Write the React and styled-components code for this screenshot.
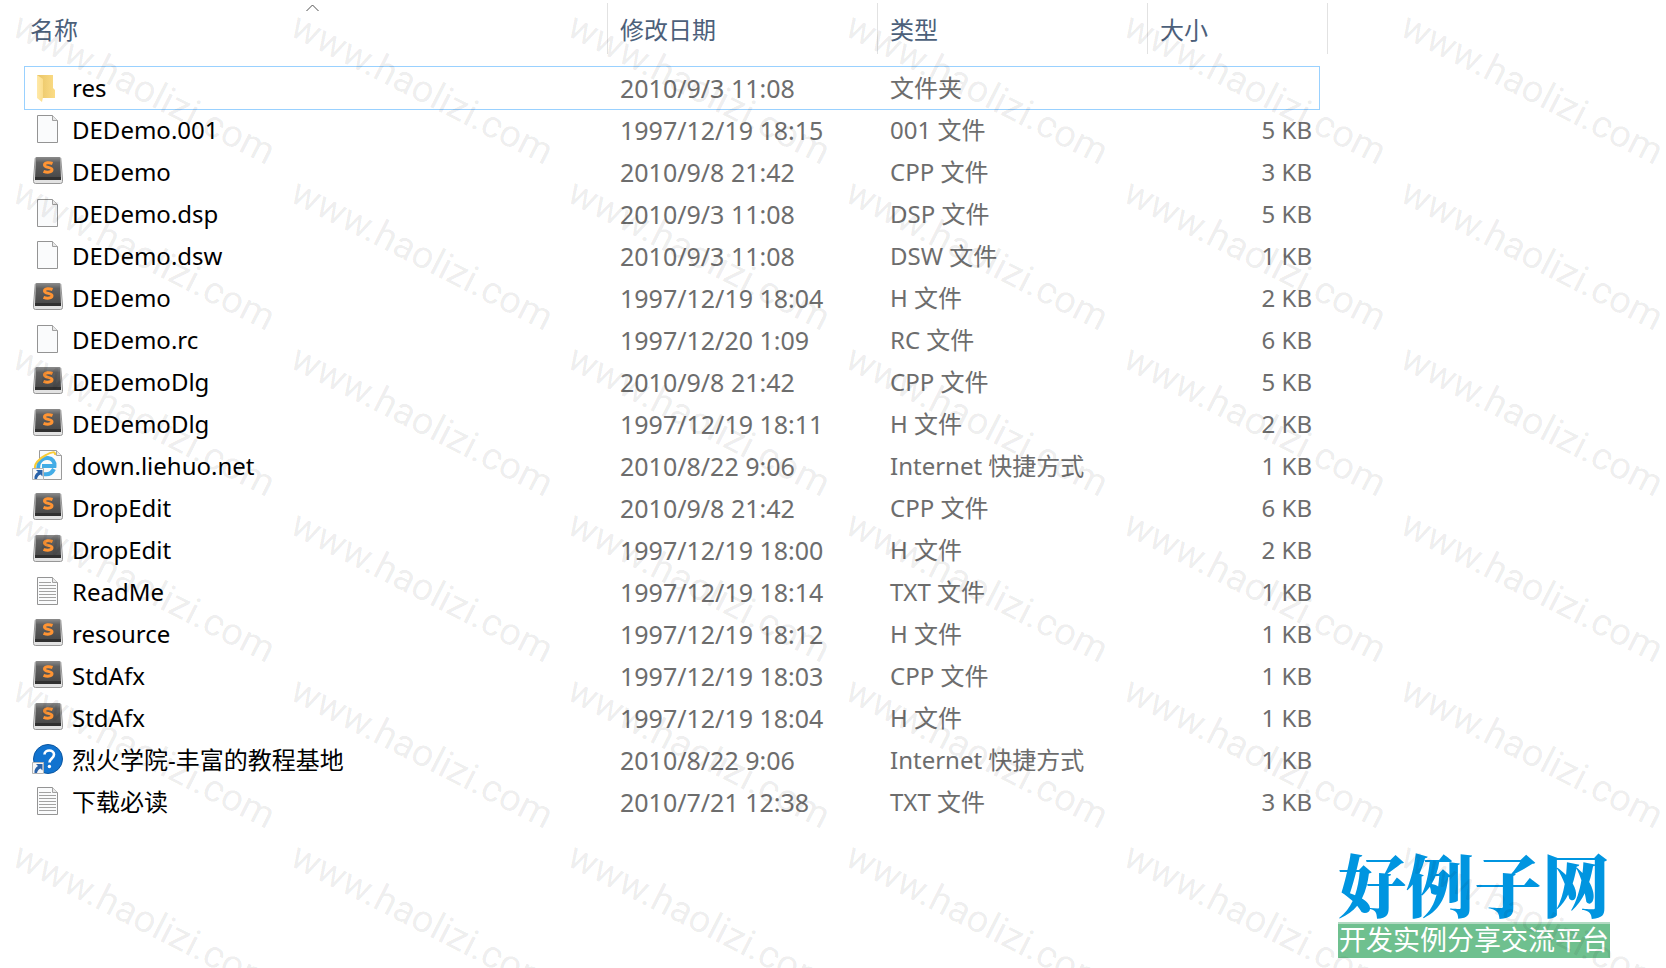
import React from 'react';
import styled, { createGlobalStyle, css } from 'styled-components';

const GlobalStyle = createGlobalStyle`
  * {
    box-sizing: border-box;
  }

  body {
    margin: 0;
    background: #fff;
    font-family: 'Noto Sans', 'Noto Sans CJK SC', sans-serif;
    font-size: 24px;
  }
`;

const Page = styled.main`
  position: relative;
  display: flex;
  flex-direction: column;
  min-height: 100vh;
  overflow: hidden;
`;

const SortMark = styled.div`
  position: absolute;
  top: 4px;
  left: 306px;
  display: flex;
`;

const FileTable = styled.table`
  width: 80%;
  max-width: 1304px;
  margin-left: 24px;
  border-collapse: separate;
  border-spacing: 0;
  table-layout: fixed;
`;

const Column = styled.col`
  width: ${({ $width }) => ($width ? `${$width}px` : 'auto')};
`;

const HeadCell = styled.th`
  position: relative;
  height: 67px;
  padding: 0 0 8px ${({ $first }) => ($first ? 6 : 12)}px;
  color: #4c607a;
  font-weight: 400;
  line-height: 32px;
  text-align: left;
  white-space: nowrap;

  &::after {
    content: '';
    position: absolute;
    top: 3px;
    right: 0;
    width: 1px;
    height: 51px;
    background: #e2e2e2;
  }
`;

const Cell = styled.td`
  height: 42px;
  padding: 0 0 0 12px;
  color: #6d6d6d;
  line-height: 32px;
  white-space: nowrap;
`;

const NameCell = styled(Cell)`
  padding-left: 8px;
  color: #000;
`;

const DateCell = styled(Cell)`
  font-size: 25px;
`;

const SizeCell = styled(Cell)`
  padding-right: 8px;
  text-align: right;
`;

const Row = styled.tr`
  ${({ $selected }) =>
    $selected &&
    css`
      ${Cell} {
        box-shadow: 0 -1px #99d1ff, 0 1px #99d1ff;
      }

      ${NameCell} {
        box-shadow: 0 -1px #99d1ff, 0 1px #99d1ff, inset 1px 0 #99d1ff;
      }

      ${SizeCell} {
        box-shadow: 0 -1px #99d1ff, 0 1px #99d1ff, inset -1px 0 #99d1ff;
      }
    `}
`;

const FileName = styled.div`
  display: flex;
  align-items: center;
  gap: 8px;
`;

const Icon = styled.svg`
  flex: none;
  width: 32px;
  height: 32px;
  margin-bottom: 2px;
`;

const Watermark = styled.div`
  position: absolute;
  inset: 0;
  display: grid;
  grid-template-columns: repeat(6, minmax(0, 1fr));
  grid-auto-rows: 166px;
  color: rgba(0, 0, 0, 0.08);
  font-family: Roboto, sans-serif;
  font-size: 38px;
  line-height: 40px;
  pointer-events: none;
`;

const WatermarkText = styled.span`
  padding: 3px 0 0 16px;
  white-space: nowrap;
  transform: rotate(27deg);
  transform-origin: 16px 23px;
`;

const Brand = styled.footer`
  position: absolute;
  right: 56px;
  bottom: 10px;
  display: flex;
  flex-direction: column;
  width: 272px;
`;

const BrandName = styled.div`
  color: #0095e0;
  font-family: 'Noto Serif CJK SC', 'Noto Sans CJK SC', sans-serif;
  font-size: 68px;
  font-weight: 900;
  line-height: 78px;
`;

const BrandSlogan = styled.div`
  height: 36px;
  border-top: 2px solid #b3dac3;
  background: #6fc08f;
  color: #fff;
  font-family: 'Noto Sans CJK SC', sans-serif;
  font-size: 27px;
  line-height: 30px;
  text-align: center;
  white-space: nowrap;
`;

const FolderIcon = () => (
  <Icon viewBox='0 0 32 32' aria-hidden='true'>
    <defs>
      <linearGradient id='folderBack' x1='0' x2='1'>
        <stop offset='0' stopColor='#e9c465' />
        <stop offset='1' stopColor='#fbdc86' />
      </linearGradient>
      <linearGradient id='folderFront' x1='0' x2='1'>
        <stop offset='0' stopColor='#ffe9a8' />
        <stop offset='1' stopColor='#fbdd8c' />
      </linearGradient>
    </defs>
    <path d='M5 4h16v13l2 2v8H9z' fill='url(#folderBack)' />
    <path d='M5 4l6 4v18l-1 5-5-4z' fill='url(#folderFront)' />
  </Icon>
);

const PaperIcon = ({ lines }) => (
  <Icon viewBox='0 0 32 32' aria-hidden='true'>
    <path d='M5.500 2.500h15l5 5v22h-20z' fill='#fafbfc' stroke='#949494' />
    <path d='M20.500 2.500v5h5' fill='#e8e8e8' stroke='#a0a0a0' />
    {lines && (
      <path
        d='M7 7.500h12M7 10.500h17M7 13.500h17M7 16.500h17M7 19.500h17M7 22.500h17M7 25.500h17'
        stroke='#a2a2a2'
      />
    )}
  </Icon>
);

const SublimeIcon = () => (
  <Icon viewBox='0 0 32 32' aria-hidden='true'>
    <defs>
      <linearGradient id='sublimeKey' x1='0' x2='0' y1='0' y2='1'>
        <stop offset='0' stopColor='#8c8c8c' />
        <stop offset='0.25' stopColor='#606060' />
        <stop offset='1' stopColor='#474747' />
      </linearGradient>
    </defs>
    <path
      d='M4.500 2.500h23q1 0 1.300 1L30.500 24v2.500q0 2-2 2h-25q-2 0-2-2V24L3.200 3.500q.3-1 1.300-1z'
      fill='#e2e2e2'
      stroke='#979797'
    />
    <path d='M5 2h22q1 0 1.200 1L29 24H3L3.800 3Q4 2 5 2z' fill='url(#sublimeKey)' />
    <path d='M3 22h26v3H3z' fill='#303030' />
    <path
      d='M20.500 8.500c-3-1.200-8-1.200-8 1.500 0 3 7.500 1.800 7.500 4.800 0 2.700-5 2.900-8.500 1.500'
      fill='none'
      stroke='#ff9433'
      strokeWidth='3'
    />
  </Icon>
);

const ShortcutArrow = () => (
  <>
    <path d='M.5 19.500h11v11H.5z' fill='#f7f7f7' stroke='#b4b4b4' />
    <path d='M4 21h6.500v6.500l-2-2c-2 1-3 2-3.500 4.500H2.500c-.5-3 1-5.500 3.500-7z' fill='#2a62a8' />
  </>
);

const InternetIcon = () => (
  <Icon viewBox='0 0 32 32' aria-hidden='true'>
    <path d='M7.500 1.500h17l5 5v24h-22z' fill='#fafafa' stroke='#9a9a9a' />
    <path d='M24.500 1.500v5h5' fill='#ececec' stroke='#a0a0a0' />
    <path
      d='M22 20c-2 4-6 6-10.500 5-4-1-6-5-5-9.500 1-4 5-7 9.500-6.500 4.500.5 7 4 6.500 8H10'
      fill='none'
      stroke='#42ace6'
      strokeWidth='4'
    />
    <path
      d='M4 21C0 16 8 9 14 6c5-3 10-4 9 0'
      fill='none'
      stroke='#f9cb35'
      strokeWidth='2'
    />
    <ShortcutArrow />
  </Icon>
);

const HelpIcon = () => (
  <Icon viewBox='0 0 32 32' aria-hidden='true'>
    <circle cx='16' cy='16' r='14.500' fill='#1173cf' stroke='#0b56a0' />
    <path
      d='M12.500 11.500c0-5 9.500-5.500 9.500 0 0 4-4.500 4-4.500 8'
      fill='none'
      stroke='#fff'
      strokeWidth='2.600'
    />
    <circle cx='17.400' cy='23.500' r='1.700' fill='#fff' />
    <ShortcutArrow />
  </Icon>
);

const icons = {
  folder: <FolderIcon />,
  paper: <PaperIcon />,
  text: <PaperIcon lines />,
  sublime: <SublimeIcon />,
  internet: <InternetIcon />,
  help: <HelpIcon />,
};

const files = [
  ['folder', 'res', '2010/9/3 11:08', '文件夹', ''],
  ['paper', 'DEDemo.001', '1997/12/19 18:15', '001 文件', '5 KB'],
  ['sublime', 'DEDemo', '2010/9/8 21:42', 'CPP 文件', '3 KB'],
  ['paper', 'DEDemo.dsp', '2010/9/3 11:08', 'DSP 文件', '5 KB'],
  ['paper', 'DEDemo.dsw', '2010/9/3 11:08', 'DSW 文件', '1 KB'],
  ['sublime', 'DEDemo', '1997/12/19 18:04', 'H 文件', '2 KB'],
  ['paper', 'DEDemo.rc', '1997/12/20 1:09', 'RC 文件', '6 KB'],
  ['sublime', 'DEDemoDlg', '2010/9/8 21:42', 'CPP 文件', '5 KB'],
  ['sublime', 'DEDemoDlg', '1997/12/19 18:11', 'H 文件', '2 KB'],
  ['internet', 'down.liehuo.net', '2010/8/22 9:06', 'Internet 快捷方式', '1 KB'],
  ['sublime', 'DropEdit', '2010/9/8 21:42', 'CPP 文件', '6 KB'],
  ['sublime', 'DropEdit', '1997/12/19 18:00', 'H 文件', '2 KB'],
  ['text', 'ReadMe', '1997/12/19 18:14', 'TXT 文件', '1 KB'],
  ['sublime', 'resource', '1997/12/19 18:12', 'H 文件', '1 KB'],
  ['sublime', 'StdAfx', '1997/12/19 18:03', 'CPP 文件', '1 KB'],
  ['sublime', 'StdAfx', '1997/12/19 18:04', 'H 文件', '1 KB'],
  ['help', '烈火学院-丰富的教程基地', '2010/8/22 9:06', 'Internet 快捷方式', '1 KB'],
  ['text', '下载必读', '2010/7/21 12:38', 'TXT 文件', '3 KB'],
];

const App = () => {
  return (
    <Page>
      <GlobalStyle />
      <SortMark>
        <svg width='13' height='8' viewBox='0 0 13 8' aria-hidden='true'>
          <path d='M.5 7l6-6 6 6' fill='none' stroke='#4f4f4f' />
        </svg>
      </SortMark>

      <FileTable>
        <colgroup>
          <Column />
          <Column $width={270} />
          <Column $width={270} />
          <Column $width={172} />
          <Column $width={8} />
        </colgroup>
        <thead>
          <tr>
            <HeadCell $first>名称</HeadCell>
            <HeadCell>修改日期</HeadCell>
            <HeadCell>类型</HeadCell>
            <HeadCell colSpan={2}>大小</HeadCell>
          </tr>
        </thead>
        <tbody>
          {files.map(([icon, name, date, type, size], index) => (
            <Row key={index} $selected={index === 0}>
              <NameCell>
                <FileName>
                  {icons[icon]}
                  {name}
                </FileName>
              </NameCell>
              <DateCell>{date}</DateCell>
              <Cell>{type}</Cell>
              <SizeCell>{size}</SizeCell>
            </Row>
          ))}
        </tbody>
      </FileTable>

      <Brand>
        <BrandName>好例子网</BrandName>
        <BrandSlogan>开发实例分享交流平台</BrandSlogan>
      </Brand>

      <Watermark aria-hidden='true'>
        {Array.from({ length: 36 }, (_, index) => (
          <WatermarkText key={index}>www.haolizi.com</WatermarkText>
        ))}
      </Watermark>
    </Page>
  );
};

export default App;
